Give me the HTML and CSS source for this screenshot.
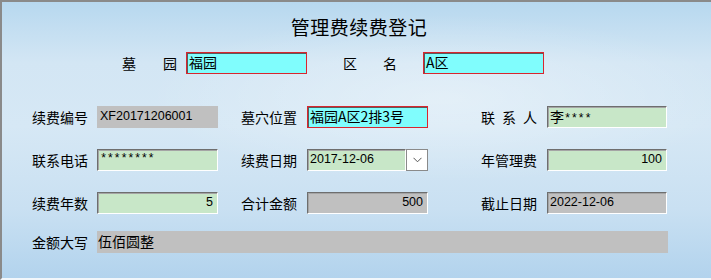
FILE: index.html
```html
<!DOCTYPE html>
<html lang="zh-CN">
<head>
  <meta charset="UTF-8">
  <meta name="viewport" content="width=device-width, initial-scale=1.0">
  <title>管理费续费登记</title>
  <link rel="stylesheet" href="styles.css">
</head>
<body>
  <div class="form">
    <div class="title">管理费续费登记</div>

    <div class="head-row">
      <div class="label spread w55"><span>墓</span><span>园</span></div>
      <div class="field key">福园</div>
      <div class="label spread w54 ml36"><span>区</span><span>名</span></div>
      <div class="field key ml26">A区</div>
    </div>

    <div class="grid">
      <div class="label">续费编号</div>
      <div class="field flat gray en">XF20171206001</div>
      <div class="label">墓穴位置</div>
      <div class="field key">福园A区2排3号</div>
      <div class="label spread"><span>联</span><span>系</span><span>人</span></div>
      <div class="field green">李<span class="stars">****</span></div>

      <div class="label">联系电话</div>
      <div class="field green en stars">********</div>
      <div class="label">续费日期</div>
      <div class="date">
        <div class="field green en date-box">2017-12-06</div>
        <div class="drop">
          <svg width="9" height="6" viewBox="0 0 9 6"><path d="M0.5 0.8 L4.5 4.8 L8.5 0.8" fill="none" stroke="#555" stroke-width="1"/></svg>
        </div>
      </div>
      <div class="label">年管理费</div>
      <div class="field green en num">100</div>

      <div class="label">续费年数</div>
      <div class="field green en num">5</div>
      <div class="label">合计金额</div>
      <div class="field gray en num">500</div>
      <div class="label">截止日期</div>
      <div class="field gray en">2022-12-06</div>

      <div class="label last">金额大写</div>
      <div class="field flat gray wide last">伍佰圆整</div>
    </div>
  </div>
</body>
</html>
```

FILE: styles.css
```css
body {
  margin: 0;
  font-family: "Noto Sans CJK SC", "Liberation Sans", sans-serif;
  font-size: 14px;
  color: #000;
}

.form {
  box-sizing: border-box;
  width: 711px;
  height: 280px;
  border-top: 2px solid #8a8a8a;
  border-left: 2px solid #8a8a8a;
  border-bottom: 2px solid #f2f7fb;
  background:
    radial-gradient(ellipse 420px 120px at 62% 35%, rgba(255, 255, 255, 0.35), rgba(255, 255, 255, 0) 70%),
    linear-gradient(180deg, #b7d8ef 0%, #d3e6f4 22%, #d6e8f5 45%, #c9e0f2 75%, #b2d3ed 100%);
}

.title {
  margin-top: 13px;
  padding-left: 5px;
  text-align: center;
  font-size: 19px;
  line-height: 24px;
  letter-spacing: 0.5px;
}

.head-row {
  display: flex;
  align-items: center;
  margin-top: 13px;
  padding-left: 120px;
  height: 22px;
}

.head-row .field {
  width: 121px;
  margin-left: 9px;
}

.w55 { width: 55px; }
.w54 { width: 54px; }
.ml36 { margin-left: 36px; }
.head-row .ml26 { margin-left: 26px; }

.label {
  line-height: 22px;
  white-space: nowrap;
}

.spread {
  display: flex;
  justify-content: space-between;
}

.grid .spread {
  width: 56px;
}

.grid {
  display: grid;
  grid-template-columns: 65px 144px 66px 174px 66px 120px;
  grid-auto-rows: 22px;
  row-gap: 21px;
  margin-top: 32px;
  margin-left: 30px;
}

.grid .field {
  width: 121px;
}

.grid .field:nth-child(6n) {
  width: 120px;
}

.field {
  box-sizing: border-box;
  height: 22px;
  line-height: 19px;
  padding: 0 4px 0 2px;
  white-space: nowrap;
  overflow: hidden;
  border: 1px solid;
  border-color: #6e6e6e #fff #fff #6e6e6e;
  box-shadow: inset 1px 1px 0 #a5a5a5;
}

.key {
  background: #80fdfd;
  border: 1px solid #d8262e;
  box-shadow: inset 1px 1px 0 #5a5a5a;
}

.green {
  background: #c8e7c8;
}

.gray {
  background: #c0c0c0;
}

.flat {
  border-color: transparent;
  box-shadow: none;
}

.en {
  font-family: "Liberation Sans", "Noto Sans CJK SC", sans-serif;
  font-size: 12.5px;
}

.stars {
  font-family: "Liberation Mono", monospace;
  font-size: 12px;
  letter-spacing: -0.4px;
}

.num {
  text-align: right;
}

.date {
  display: flex;
}

.grid .date-box {
  width: 99px;
}

.drop {
  box-sizing: border-box;
  width: 22px;
  height: 22px;
  background: #fff;
  border: 1px solid #8a8a8a;
  display: flex;
  align-items: center;
  justify-content: center;
}

.last {
  margin-top: -4px;
}

.grid .wide {
  grid-column: 2 / 7;
  width: 571px;
  font-size: 14px;
  line-height: 18px;
  padding-left: 0;
}
```
